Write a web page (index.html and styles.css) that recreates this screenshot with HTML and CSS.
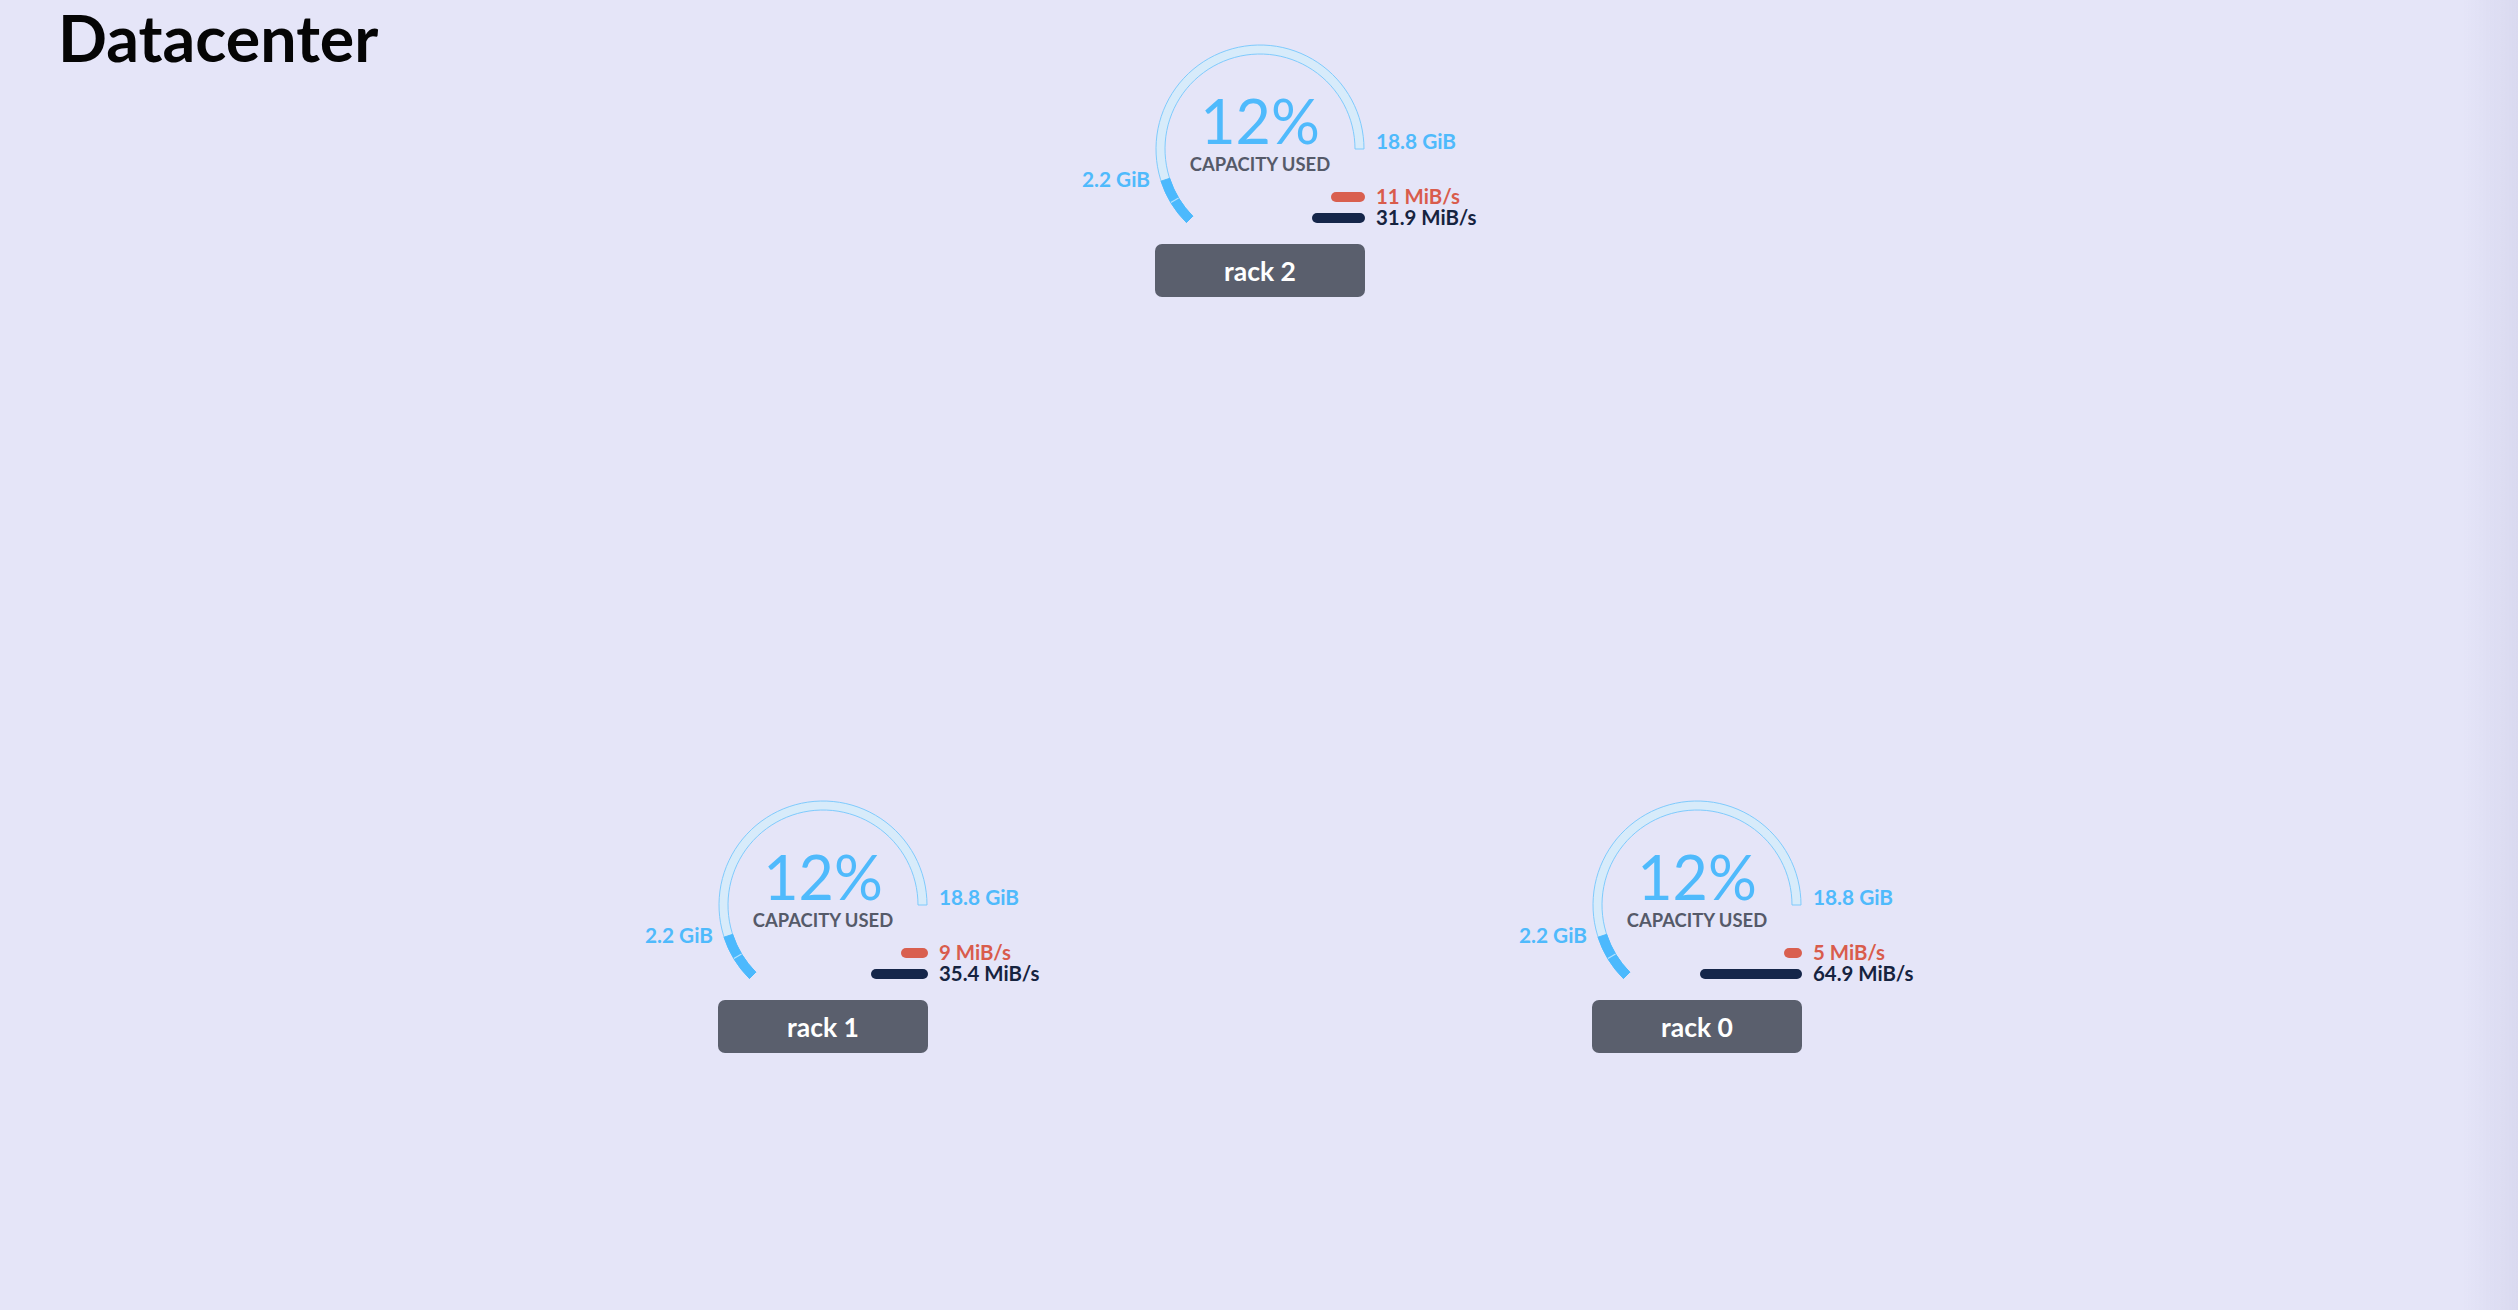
FILE: index.html
```html
<!DOCTYPE html>
<html>
<head>
<meta charset="utf-8">
<title>Datacenter</title>
<link rel="stylesheet" href="styles.css">
</head>
<body>
<h1 class="title">Datacenter</h1>
<div class="canvas">

  <div class="node node-rack2">
    <div class="gauge">
      <svg class="arc" width="210" height="184" viewBox="0 0 210 184">
        <path class="track" d="M31.46 178.54 A104 104 0 1 1 209 105 L200 105 A95 95 0 1 0 37.82 172.18 Z"/>
        <path class="fill" d="M31.46 178.54 A104 104 0 0 1 6.09 137.14 L14.65 134.36 A95 95 0 0 0 37.82 172.18 Z"/>
        <line class="tick" x1="15.85" y1="158.56" x2="23.57" y2="153.93"/>
      </svg>
      <div class="pct">12%</div>
      <div class="cap">CAPACITY USED</div>
      <div class="max">18.8 GiB</div>
      <div class="used">2.2 GiB</div>
      <div class="rates">
        <div class="rate"><span class="bar-cell"><span class="bar bar-r" style="width:34px"></span></span><span class="rate-r">11 MiB/s</span></div>
        <div class="rate"><span class="bar-cell"><span class="bar bar-w" style="width:53px"></span></span><span class="rate-w">31.9 MiB/s</span></div>
      </div>
    </div>
    <div class="name">rack 2</div>
  </div>

  <div class="node node-rack1">
    <div class="gauge">
      <svg class="arc" width="210" height="184" viewBox="0 0 210 184">
        <path class="track" d="M31.46 178.54 A104 104 0 1 1 209 105 L200 105 A95 95 0 1 0 37.82 172.18 Z"/>
        <path class="fill" d="M31.46 178.54 A104 104 0 0 1 6.09 137.14 L14.65 134.36 A95 95 0 0 0 37.82 172.18 Z"/>
        <line class="tick" x1="15.85" y1="158.56" x2="23.57" y2="153.93"/>
      </svg>
      <div class="pct">12%</div>
      <div class="cap">CAPACITY USED</div>
      <div class="max">18.8 GiB</div>
      <div class="used">2.2 GiB</div>
      <div class="rates">
        <div class="rate"><span class="bar-cell"><span class="bar bar-r" style="width:27px"></span></span><span class="rate-r">9 MiB/s</span></div>
        <div class="rate"><span class="bar-cell"><span class="bar bar-w" style="width:57px"></span></span><span class="rate-w">35.4 MiB/s</span></div>
      </div>
    </div>
    <div class="name">rack 1</div>
  </div>

  <div class="node node-rack0">
    <div class="gauge">
      <svg class="arc" width="210" height="184" viewBox="0 0 210 184">
        <path class="track" d="M31.46 178.54 A104 104 0 1 1 209 105 L200 105 A95 95 0 1 0 37.82 172.18 Z"/>
        <path class="fill" d="M31.46 178.54 A104 104 0 0 1 6.09 137.14 L14.65 134.36 A95 95 0 0 0 37.82 172.18 Z"/>
        <line class="tick" x1="15.85" y1="158.56" x2="23.57" y2="153.93"/>
      </svg>
      <div class="pct">12%</div>
      <div class="cap">CAPACITY USED</div>
      <div class="max">18.8 GiB</div>
      <div class="used">2.2 GiB</div>
      <div class="rates">
        <div class="rate"><span class="bar-cell"><span class="bar bar-r" style="width:18px"></span></span><span class="rate-r">5 MiB/s</span></div>
        <div class="rate"><span class="bar-cell"><span class="bar bar-w" style="width:102px"></span></span><span class="rate-w">64.9 MiB/s</span></div>
      </div>
    </div>
    <div class="name">rack 0</div>
  </div>

</div>
<div class="edge-shade"></div>
</body>
</html>
```

FILE: styles.css
```css
html, body {
  margin: 0;
  padding: 0;
  height: 100%;
}
body {
  background: #e5e5f8;
  font-family: "Lato", "Noto Sans", sans-serif;
  color: #000;
  overflow: hidden;
  position: relative;
}
.title {
  margin: 0;
  padding: 5px 0 0 58px;
  font-size: 64.5px;
  line-height: 64px;
  font-weight: 700;
  color: #050505;
}
.canvas {
  position: absolute;
  inset: 0;
}
.node {
  position: absolute;
  width: 210px;
  display: flex;
  flex-direction: column;
}
.node-rack2 { left: 1155px; top: 44px; }
.node-rack1 { left: 718px; top: 800px; }
.node-rack0 { left: 1592px; top: 800px; }

.gauge {
  position: relative;
  width: 210px;
  height: 200px;
}
.arc {
  display: block;
  overflow: visible;
}
.track {
  fill: #d7ebfa;
  stroke: #7fcbfd;
  stroke-width: 1;
}
.fill {
  fill: #4cb9fd;
  stroke: #4cb9fd;
  stroke-width: 1;
}
.tick {
  stroke: #b5e1ff;
  stroke-width: 1.2;
}
.pct {
  position: absolute;
  left: 0;
  right: 0;
  top: 46px;
  text-align: center;
  font-size: 61px;
  line-height: 61px;
  font-weight: 400;
  color: #4fbafc;
}
.cap {
  position: absolute;
  left: -20px;
  right: -20px;
  top: 111px;
  text-align: center;
  font-size: 18.4px;
  line-height: 18px;
  font-weight: 700;
  color: #555a69;
}
.max {
  position: absolute;
  left: 221px;
  top: 87px;
  white-space: nowrap;
  font-size: 20.8px;
  line-height: 20px;
  font-weight: 700;
  color: #4fbafc;
}
.used {
  position: absolute;
  right: 215px;
  top: 125px;
  white-space: nowrap;
  font-size: 20.8px;
  line-height: 20px;
  font-weight: 700;
  color: #4fbafc;
}
.rates {
  position: absolute;
  left: 0;
  top: 142px;
  display: flex;
  flex-direction: column;
}
.rate {
  display: flex;
  align-items: center;
  gap: 11px;
  height: 21px;
  font-size: 20.4px;
  line-height: 21px;
  font-weight: 700;
  white-space: nowrap;
}
.bar-cell {
  width: 210px;
  display: flex;
  justify-content: flex-end;
}
.bar {
  display: block;
  height: 10px;
  border-radius: 5px;
}
.bar-r { background: #d95f4f; }
.bar-w { background: #15264a; }
.rate-r { color: #d95c4c; }
.rate-w { color: #16233f; }

.name {
  height: 53px;
  border-radius: 7px;
  background: #5a5f6d;
  color: #fff;
  font-size: 26.5px;
  font-weight: 700;
  display: flex;
  align-items: center;
  justify-content: center;
}
.edge-shade {
  position: fixed;
  top: 0;
  right: 0;
  bottom: 0;
  width: 56px;
  background: linear-gradient(to right, rgba(40, 40, 110, 0), rgba(40, 40, 110, 0.06));
  pointer-events: none;
}
```
